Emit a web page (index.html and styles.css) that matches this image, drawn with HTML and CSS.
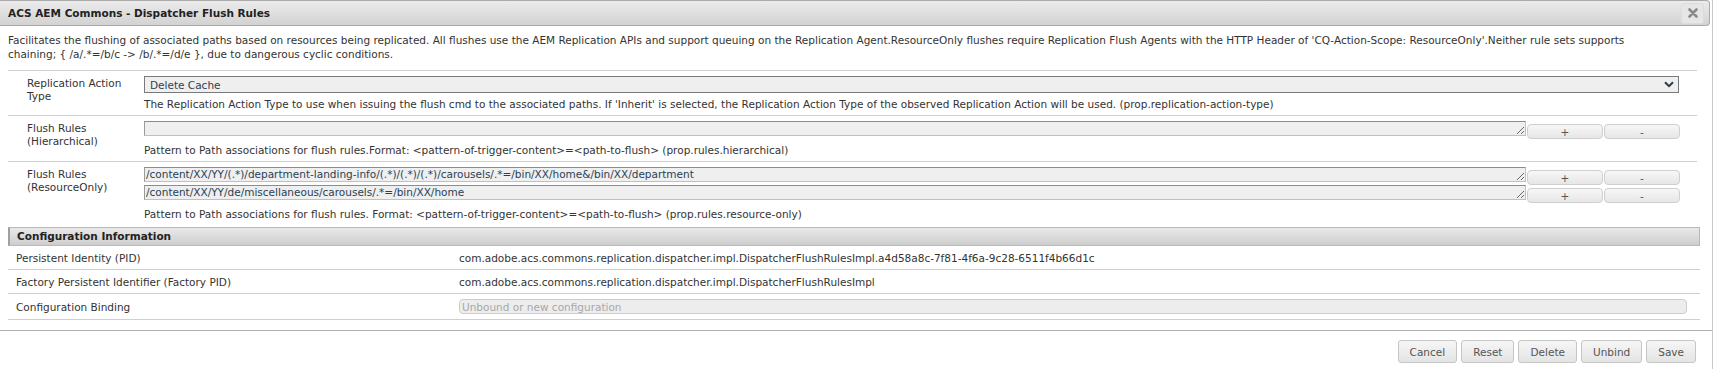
FILE: index.html
```html
<!DOCTYPE html>
<html lang="en">
<head>
    <meta charset="UTF-8">
    <title>ACS AEM Commons - Dispatcher Flush Rules</title>
    <link rel="stylesheet" href="styles.css">
</head>
<body>
    <div class="dialog">
        <div class="titlebar">
            <span class="title">ACS AEM Commons - Dispatcher Flush Rules</span>
            <button class="close-btn" title="close">
                <svg width="10" height="10" viewBox="0 0 10 10"><path d="M1.5 1.5 L8.5 8.5 M8.5 1.5 L1.5 8.5" stroke="#8a8a8a" stroke-width="2.6" stroke-linecap="round"/></svg>
            </button>
        </div>

        <div class="content">
            <p class="description">Facilitates the flushing of associated paths based on resources being replicated. All flushes use the AEM Replication APIs and support queuing on the Replication Agent.ResourceOnly flushes require Replication Flush Agents with the HTTP Header of 'CQ-Action-Scope: ResourceOnly'.Neither rule sets supports chaining; { /a/.*=/b/c -&gt; /b/.*=/d/e }, due to dangerous cyclic conditions.</p>

            <div class="prop-row">
                <div class="prop-label">Replication Action Type</div>
                <div class="prop-field">
                    <div class="select-box">
                        <span>Delete Cache</span>
                        <svg width="10" height="7" viewBox="0 0 10 7"><path d="M1 1.2 L5 5.2 L9 1.2" fill="none" stroke="#2d3b4a" stroke-width="2"/></svg>
                    </div>
                    <div class="help">The Replication Action Type to use when issuing the flush cmd to the associated paths. If 'Inherit' is selected, the Replication Action Type of the observed Replication Action will be used. (prop.replication-action-type)</div>
                </div>
            </div>

            <div class="prop-row">
                <div class="prop-label">Flush Rules (Hierarchical)</div>
                <div class="prop-field">
                    <div class="value-line">
                        <textarea rows="1"></textarea>
                        <button class="small-btn">+</button>
                        <button class="small-btn">-</button>
                    </div>
                    <div class="help">Pattern to Path associations for flush rules.Format: &lt;pattern-of-trigger-content&gt;=&lt;path-to-flush&gt; (prop.rules.hierarchical)</div>
                </div>
            </div>

            <div class="prop-row">
                <div class="prop-label">Flush Rules (ResourceOnly)</div>
                <div class="prop-field">
                    <div class="value-line">
                        <textarea rows="1">/content/XX/YY/(.*)/department-landing-info/(.*)/(.*)/(.*)/carousels/.*=/bin/XX/home&amp;/bin/XX/department</textarea>
                        <button class="small-btn">+</button>
                        <button class="small-btn">-</button>
                    </div>
                    <div class="value-line">
                        <textarea rows="1">/content/XX/YY/de/miscellaneous/carousels/.*=/bin/XX/home</textarea>
                        <button class="small-btn">+</button>
                        <button class="small-btn">-</button>
                    </div>
                    <div class="help">Pattern to Path associations for flush rules. Format: &lt;pattern-of-trigger-content&gt;=&lt;path-to-flush&gt; (prop.rules.resource-only)</div>
                </div>
            </div>

            <div class="config-info">
                <div class="config-header">Configuration Information</div>
                <div class="config-row">
                    <div>Persistent Identity (PID)</div>
                    <div>com.adobe.acs.commons.replication.dispatcher.impl.DispatcherFlushRulesImpl.a4d58a8c-7f81-4f6a-9c28-6511f4b66d1c</div>
                </div>
                <div class="config-row">
                    <div>Factory Persistent Identifier (Factory PID)</div>
                    <div>com.adobe.acs.commons.replication.dispatcher.impl.DispatcherFlushRulesImpl</div>
                </div>
                <div class="config-row">
                    <div>Configuration Binding</div>
                    <div><input class="binding" type="text" placeholder="Unbound or new configuration" disabled></div>
                </div>
            </div>
        </div>

        <div class="button-pane">
            <button class="dlg-btn">Cancel</button>
            <button class="dlg-btn">Reset</button>
            <button class="dlg-btn">Delete</button>
            <button class="dlg-btn">Unbind</button>
            <button class="dlg-btn">Save</button>
        </div>
    </div>
</body>
</html>
```

FILE: styles.css
```css
body {
    margin: 0;
    font-family: 'DejaVu Sans', Verdana, sans-serif;
    font-size: 10.5px;
    color: #333333;
    background-color: #ffffff;
    overflow: hidden;
}

.dialog {
    width: 1713px;
    height: 369px;
    box-sizing: border-box;
    border-right: 1px solid #c8c8c8;
    display: flex;
    flex-direction: column;
}

/* Title bar */
.titlebar {
    height: 26px;
    box-sizing: border-box;
    margin-right: 2px;
    border: 1px solid #aaaaaa;
    border-left: none;
    border-radius: 0 4px 4px 0;
    background: linear-gradient(#ececec, #d2d2d2);
    display: flex;
    align-items: center;
    justify-content: space-between;
    padding: 0 5px 0 8px;
}

.title {
    font-weight: bold;
    color: #222222;
}

.close-btn {
    width: 23px;
    height: 21px;
    padding: 0;
    border: 1px solid #dcdcdc;
    border-radius: 3px;
    background: #e6e6e6;
    display: flex;
    align-items: center;
    justify-content: center;
}

.content {
    padding: 7px 12px 0 8px;
}

.description {
    margin: 0 40px 9px 0;
    line-height: 14px;
}

/* Property rows */
.prop-row {
    display: grid;
    grid-template-columns: 136px 1fr;
    border-top: 1px solid #d0d0d0;
    padding: 5px 0 4px 0;
    margin-right: 3px;
}

.prop-row:last-of-type {
    border-bottom: 1px solid #d0d0d0;
}

.prop-label {
    padding: 1px 10px 0 19px;
    line-height: 13px;
}

.prop-field {
    padding-right: 17px;
}

.select-box {
    height: 17px;
    box-sizing: border-box;
    margin-right: 1px;
    border: 1px solid #7a7a7a;
    background: #efefef;
    display: flex;
    align-items: center;
    justify-content: space-between;
    padding: 0 4px 0 5px;
    color: #2a3f55;
}

.help {
    line-height: 14px;
    margin-top: 4px;
}

.value-line {
    display: flex;
    align-items: flex-start;
    height: 18px;
}

textarea {
    width: 1382px;
    height: 15px;
    box-sizing: border-box;
    margin: 0;
    padding: 0 1px;
    border: 1px solid #c0c0c0;
    border-top-color: #8c8c8c;
    border-left-color: #9a9a9a;
    background: #efefef;
    font-family: 'DejaVu Sans', Verdana, sans-serif;
    font-size: 10.5px;
    line-height: 13px;
    color: #2a3f55;
    overflow: hidden;
    resize: both;
}

.small-btn {
    width: 76px;
    height: 15px;
    margin: 3px 0 0 1px;
    padding: 0;
    border: 1px solid #cfcfcf;
    border-radius: 4px;
    background: linear-gradient(#f7f7f7, #e6e6e6);
    color: #555555;
    font-family: 'DejaVu Sans', Verdana, sans-serif;
    font-size: 10.5px;
    line-height: 12px;
}

/* Configuration information */
.config-info {
    margin-top: 2px;
}

.config-header {
    height: 19px;
    box-sizing: border-box;
    border: 1px solid #b9b9b9;
    border-left: 2px solid #a0a0a0;
    background: linear-gradient(#e9e9e9, #cdcdcd);
    font-weight: bold;
    color: #222222;
    padding-left: 7px;
    line-height: 17px;
}

.config-row {
    display: grid;
    grid-template-columns: 443px 1fr;
    align-items: center;
    height: 24px;
    box-sizing: border-box;
    border-bottom: 1px solid #d0d0d0;
    padding-left: 8px;
}

.config-row:last-child {
    height: 26px;
    padding-right: 13px;
}

.binding {
    display: block;
    width: 100%;
    height: 15px;
    box-sizing: border-box;
    margin: 0;
    padding: 0 2px;
    border: 1px solid #cccccc;
    border-radius: 4px;
    background: #ededed;
    font-family: 'DejaVu Sans', Verdana, sans-serif;
    font-size: 10.5px;
}

.binding::placeholder {
    color: #a8a8a8;
}

/* Bottom buttons */
.button-pane {
    margin-top: 10px;
    border-top: 1px solid #b0b0b0;
    display: flex;
    justify-content: flex-end;
    gap: 4px;
    padding: 9px 16px 0 0;
}

.dlg-btn {
    height: 23px;
    padding: 0 11px;
    border: 1px solid #c6c6c6;
    border-radius: 3px;
    background: linear-gradient(#f6f6f6, #e4e4e4);
    color: #555555;
    font-family: 'DejaVu Sans', Verdana, sans-serif;
    font-size: 10.5px;
}
```
